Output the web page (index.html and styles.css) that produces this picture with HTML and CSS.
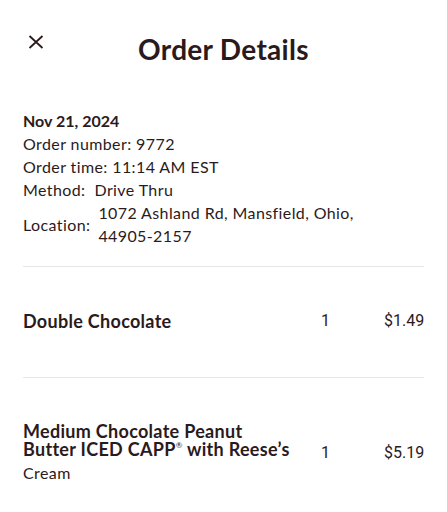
FILE: index.html
```html
<!doctype html>
<html lang="en">
<head>
<meta charset="utf-8">
<title>Order Details</title>
<link rel="stylesheet" href="styles.css">
</head>
<body>
<div class="page">
  <header class="top">
    <button class="close" aria-label="Close">
      <svg width="16" height="14" viewBox="0 0 16 14"><path d="M1.5 1L14.5 13M14.5 1L1.5 13" stroke="#2b1a1c" stroke-width="1.8" fill="none"/></svg>
    </button>
    <h1>Order Details</h1>
  </header>

  <section class="info">
    <div class="date">Nov 21, 2024</div>
    <div>Order number: 9772</div>
    <div>Order time: 11:14 AM EST</div>
    <div>Method:&nbsp; Drive Thru</div>
    <div class="loc">
      <span>Location:</span>
      <span class="addr">1072 Ashland Rd, Mansfield, Ohio,<br>44905-2157</span>
    </div>
  </section>

  <div class="item">
    <div class="name"><b>Double Chocolate</b></div>
    <div class="qty">1</div>
    <div class="price">$1.49</div>
  </div>

  <div class="item">
    <div class="name"><b>Medium Chocolate Peanut Butter ICED CAPP<sup>®</sup> with Reese’s</b><span>Cream</span></div>
    <div class="qty">1</div>
    <div class="price">$5.19</div>
  </div>
</div>
</body>
</html>
```

FILE: styles.css
```css
* {
  box-sizing: border-box;
}

html, body {
  margin: 0;
  background: #fff;
}

body {
  font-family: Lato, "Liberation Sans", sans-serif;
  color: #2b1a1c;
  font-size: 16px;
  letter-spacing: 0.4px;
}

.page {
  padding: 0 23px;
}

.top {
  position: relative;
  height: 94px;
  display: flex;
  justify-content: center;
  align-items: flex-start;
  padding-top: 31px;
}

.close {
  position: absolute;
  left: 5px;
  top: 35px;
  border: 0;
  background: none;
  padding: 0;
  width: 16px;
  height: 14px;
}

.close svg {
  display: block;
}

h1 {
  margin: 0;
  font-size: 28px;
  font-weight: 700;
  line-height: 36px;
  letter-spacing: 0.3px;
}

.info {
  padding-top: 15px;
  padding-bottom: 19px;
  line-height: 23px;
  border-bottom: 1px solid #e6e6e6;
}

.date {
  font-weight: 700;
  letter-spacing: 0;
}

.loc {
  display: flex;
  align-items: center;
  gap: 8px;
}

.item {
  display: flex;
  align-items: center;
  border-bottom: 1px solid #e6e6e6;
  padding: 44px 0 47px;
}

.item:last-child {
  border-bottom: 0;
}

.name {
  flex: 1;
  padding-right: 20px;
}

.name b {
  display: block;
  font-size: 18px;
  line-height: 18px;
  letter-spacing: 0.3px;
}

.name span {
  display: block;
  margin-top: 5px;
  line-height: 20px;
}

sup {
  font-size: 8px;
  font-weight: 400;
  vertical-align: top;
  line-height: 10px;
}

.qty,
.price {
  font-family: Roboto, "Liberation Sans", sans-serif;
  letter-spacing: 0;
  font-size: 16px;
}

.qty {
  width: 64px;
  padding-left: 1px;
}

.price {
  width: 40px;
  text-align: right;
}
```
